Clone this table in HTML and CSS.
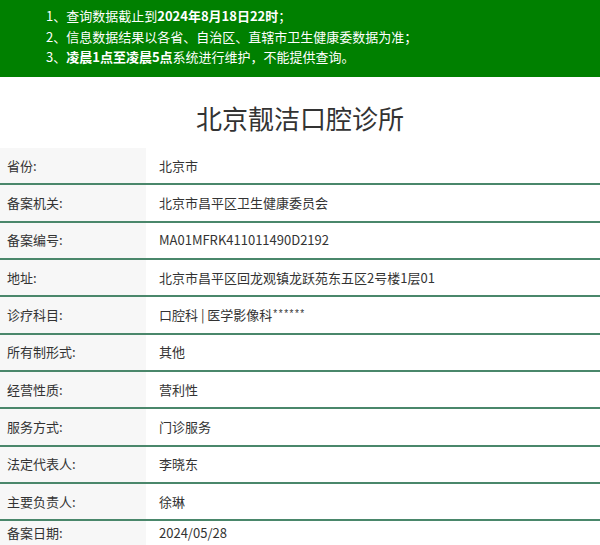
FILE: index.html
```html
<!DOCTYPE html>
<html lang="zh-CN">
<head>
<meta charset="utf-8">
<title>北京靓洁口腔诊所</title>
<link rel="stylesheet" href="styles.css">
</head>
<body>
<div class="notice">
  <p>1、查询数据截止到<b>2024年8月18日22时</b>；</p>
  <p>2、信息数据结果以各省、自治区、直辖市卫生健康委数据为准；</p>
  <p>3、<b>凌晨1点至凌晨5点</b>系统进行维护，不能提供查询。</p>
</div>
<h1 class="title">北京靓洁口腔诊所</h1>
<div class="table">
  <div class="row"><div class="label">省份:</div><div class="value">北京市</div></div>
  <div class="row"><div class="label">备案机关:</div><div class="value">北京市昌平区卫生健康委员会</div></div>
  <div class="row"><div class="label">备案编号:</div><div class="value">MA01MFRK411011490D2192</div></div>
  <div class="row"><div class="label">地址:</div><div class="value">北京市昌平区回龙观镇龙跃苑东五区2号楼1层01</div></div>
  <div class="row"><div class="label">诊疗科目:</div><div class="value">口腔科 | 医学影像科<span class="stars">******</span></div></div>
  <div class="row"><div class="label">所有制形式:</div><div class="value">其他</div></div>
  <div class="row"><div class="label">经营性质:</div><div class="value">营利性</div></div>
  <div class="row"><div class="label">服务方式:</div><div class="value">门诊服务</div></div>
  <div class="row"><div class="label">法定代表人:</div><div class="value">李晓东</div></div>
  <div class="row"><div class="label">主要负责人:</div><div class="value">徐琳</div></div>
  <div class="row last"><div class="label">备案日期:</div><div class="value">2024/05/28</div></div>
</div>
</body>
</html>
```
FILE: styles.css
```css
html, body {
  margin: 0;
  padding: 0;
  background: #fff;
}
body {
  font-family: "Noto Sans CJK SC", "Noto Sans", sans-serif;
  color: #333;
  font-size: 13px;
}
.notice {
  background: #008000;
  color: #fff;
  height: 77px;
  box-sizing: border-box;
  padding: 6px 0 0 46px;
}
.notice p {
  margin: 0;
  line-height: 20.5px;
  font-size: 13px;
}
.notice b {
  font-weight: bold;
}
.title {
  margin: 23px 0 12px;
  text-align: center;
  font-size: 26px;
  font-weight: normal;
  line-height: 36px;
  color: #333;
}
.table {
  display: flex;
  flex-direction: column;
}
.row {
  display: flex;
  height: 35.33px;
  border-bottom: 2px solid #4a876b;
}
.label {
  width: 146px;
  background: #f7f7f7;
  display: flex;
  align-items: center;
  padding: 0 0 1px 7px;
  box-sizing: border-box;
}
.value {
  display: flex;
  align-items: center;
  padding: 0 0 1px 13px;
}
.row.last .label,
.row.last .value {
  align-items: flex-start;
  padding-top: 2px;
}
.stars {
  font-family: "Liberation Sans", Arial, sans-serif;
  font-size: 10px;
  line-height: 10px;
  letter-spacing: 1.5px;
  align-self: flex-start;
  margin-top: 12px;
  margin-left: 1px;
}
```
